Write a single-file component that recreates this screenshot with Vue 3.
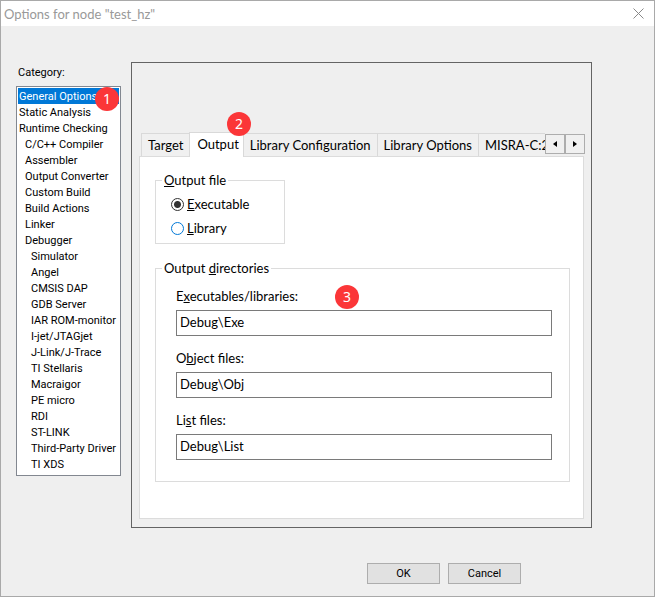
<script setup>
import { ref } from 'vue'

const categories = [
  { name: 'General Options', level: 0 },
  { name: 'Static Analysis', level: 0 },
  { name: 'Runtime Checking', level: 0 },
  { name: 'C/C++ Compiler', level: 1 },
  { name: 'Assembler', level: 1 },
  { name: 'Output Converter', level: 1 },
  { name: 'Custom Build', level: 1 },
  { name: 'Build Actions', level: 1 },
  { name: 'Linker', level: 1 },
  { name: 'Debugger', level: 1 },
  { name: 'Simulator', level: 2 },
  { name: 'Angel', level: 2 },
  { name: 'CMSIS DAP', level: 2 },
  { name: 'GDB Server', level: 2 },
  { name: 'IAR ROM-monitor', level: 2 },
  { name: 'I-jet/JTAGjet', level: 2 },
  { name: 'J-Link/J-Trace', level: 2 },
  { name: 'TI Stellaris', level: 2 },
  { name: 'Macraigor', level: 2 },
  { name: 'PE micro', level: 2 },
  { name: 'RDI', level: 2 },
  { name: 'ST-LINK', level: 2 },
  { name: 'Third-Party Driver', level: 2 },
  { name: 'TI XDS', level: 2 },
]
const selected = ref('General Options')

const tabs = ['Target', 'Output', 'Library Configuration', 'Library Options', 'MISRA-C:2004']
const activeTab = ref('Output')

const kind = ref('exe')
const exeDir = ref('Debug\\Exe')
const objDir = ref('Debug\\Obj')
const listDir = ref('Debug\\List')
</script>

<template>
  <div class="dialog">
    <header class="titlebar">
      <h1 class="title">Options for node "test_hz"</h1>
      <button class="close" type="button" aria-label="Close">
        <svg width="11" height="11" viewBox="0 0 11 11"><path d="M.5 .5l10 10M10.5 .5l-10 10" /></svg>
      </button>
    </header>

    <main class="body">
      <section class="sidebar">
        <h2 id="category" class="caption">Category:</h2>
        <div class="listwrap">
          <ul class="list" role="listbox" aria-labelledby="category">
            <li
              v-for="c in categories"
              :key="c.name"
              role="option"
              :aria-selected="c.name === selected"
              :class="['item', 'level' + c.level, { selected: c.name === selected }]"
              @click="selected = c.name"
            >{{ c.name }}</li>
          </ul>
          <span class="badge badge-list">1</span>
        </div>
      </section>

      <section class="panel">
        <div class="tabrow">
          <div class="tabs" role="tablist">
            <button
              v-for="t in tabs"
              :key="t"
              type="button"
              role="tab"
              :aria-selected="t === activeTab"
              :class="['tab', { active: t === activeTab }]"
              @click="activeTab = t"
            >{{ t }}</button>
          </div>
          <div class="scroller">
            <button type="button" aria-label="Scroll tabs left">
              <svg width="4" height="6" viewBox="0 0 4 6"><path d="M4 0v6L0 3z" /></svg>
            </button>
            <button type="button" aria-label="Scroll tabs right">
              <svg width="4" height="6" viewBox="0 0 4 6"><path d="M0 0v6l4-3z" /></svg>
            </button>
          </div>
          <span class="badge badge-tab">2</span>
        </div>

        <div class="page" role="tabpanel">
          <fieldset class="group group-file">
            <legend><u>O</u>utput file</legend>
            <label class="radio"><input v-model="kind" type="radio" name="kind" value="exe"><span><u>E</u>xecutable</span></label>
            <label class="radio"><input v-model="kind" type="radio" name="kind" value="lib" class="hot"><span><u>L</u>ibrary</span></label>
          </fieldset>

          <fieldset class="group group-dirs">
            <legend>Output <u>d</u>irectories</legend>
            <div class="field">
              <label for="exe">E<u>x</u>ecutables/libraries:</label>
              <input id="exe" v-model="exeDir" type="text">
              <span class="badge badge-field">3</span>
            </div>
            <div class="field">
              <label for="obj">O<u>b</u>ject files:</label>
              <input id="obj" v-model="objDir" type="text">
            </div>
            <div class="field">
              <label for="lst">Li<u>s</u>t files:</label>
              <input id="lst" v-model="listDir" type="text">
            </div>
          </fieldset>
        </div>
      </section>
    </main>

    <footer class="actions">
      <button type="button">OK</button>
      <button type="button">Cancel</button>
    </footer>
  </div>
</template>

<style>
body {
  margin: 0;
}
</style>

<style scoped>
.dialog {
  box-sizing: border-box;
  display: flex;
  flex-direction: column;
  min-height: 100vh;
  border: 1px solid #a9a9a9;
  background: #efefef;
  color: #000;
  font-family: Lato, "Noto Sans", sans-serif;
  font-size: 13px;
  line-height: 18px;
}

.dialog button,
.dialog input {
  box-sizing: border-box;
  margin: 0;
  padding: 0;
  font: inherit;
  color: inherit;
}

.titlebar {
  display: flex;
  align-items: center;
  justify-content: space-between;
  height: 25px;
  padding: 0 10px 0 3px;
  background: #fff;
}

.title {
  margin: 0;
  color: #999;
  font-size: 13px;
  font-weight: 400;
}

.close {
  display: flex;
  border: 0;
  background: none;
}

.close svg {
  fill: none;
  stroke: #888;
}

.body {
  flex: 1;
  display: flex;
  align-items: flex-start;
  gap: 10px;
  padding: 36px 62px 0 15px;
}

.sidebar {
  flex: none;
  width: 105px;
}

.caption {
  margin: 0;
  padding: 2px 2px 4px;
  font: 400 11px/18px Roboto, sans-serif;
}

.listwrap {
  position: relative;
}

.list {
  margin: 0;
  padding: 1px 1px 3px;
  border: 1px solid #828790;
  background: #fff;
  list-style: none;
  font: 11px/14px Roboto, sans-serif;
  white-space: nowrap;
}

.item {
  padding-top: 2px;
  padding-left: 1px;
}

.level1 {
  padding-left: 7px;
}

.level2 {
  padding-left: 13px;
}

.selected {
  background: #0078d7;
  color: #fff;
}

.badge {
  position: absolute;
  width: 24px;
  height: 24px;
  border-radius: 50%;
  background: #fb3638;
  color: #fff;
  font: 14px/24px "Noto Sans", sans-serif;
  text-align: center;
}

.badge-list {
  top: 1px;
  right: 2px;
}

.badge-tab {
  top: -20px;
  left: 88px;
}

.badge-field {
  top: -2px;
  left: 159px;
}

.panel {
  flex: 1;
  min-width: 0;
  padding: 69px 7px 8px;
  border: 1px solid #646464;
}

.tabrow {
  position: relative;
  z-index: 1;
  display: flex;
  margin-bottom: -1px;
  padding-left: 2px;
}

.tabs {
  flex: 1;
  display: flex;
  align-items: flex-end;
  min-width: 0;
  overflow: hidden;
}

.dialog .tab {
  flex: none;
  height: 23px;
  margin: 0 0 1px -1px;
  padding: 0 6px;
  border: 1px solid #d9d9d9;
  border-bottom: 0;
  background: #f0f0f0;
}

.dialog .tab:first-child {
  margin-left: 0;
}

.dialog .tab.active {
  height: 25px;
  margin-bottom: 0;
  padding: 0 4px 3px 7px;
  background: #fff;
}

.scroller {
  display: flex;
  margin: 2px -1px 3px 0;
}

.scroller button {
  display: flex;
  align-items: center;
  justify-content: center;
  width: 20px;
  height: 20px;
  border: 1px solid #adadad;
  background: #f0f0f0;
}

.page {
  padding: 14px 13px 36px 15px;
  border: 1px solid #dcdcdc;
  background: #fff;
}

.group {
  box-sizing: border-box;
  min-width: 0;
  margin: 0;
  border: 1px solid #dcdcdc;
}

.group legend {
  padding: 0 2px;
}

.group-file {
  width: 130px;
  height: 73px;
  padding: 3px 15px 0;
}

.group-file legend {
  margin-left: -9px;
}

.group-dirs {
  margin-top: 15px;
  padding: 10px 17px 21px 20px;
}

.group-dirs legend {
  margin-left: -14px;
}

.radio {
  display: flex;
  align-items: center;
  gap: 3px;
  height: 24px;
}

.dialog .radio input {
  appearance: none;
  width: 13px;
  height: 13px;
  border: 1px solid #333;
  border-radius: 50%;
  background: #fff;
}

.dialog .radio .hot {
  border-color: #0078d7;
}

.radio input:checked {
  background: radial-gradient(circle, #333 3px, #fff 4px);
}

.field {
  position: relative;
  display: flex;
  flex-direction: column;
  gap: 5px;
}

.field + .field {
  margin-top: 13px;
}

.dialog .field input {
  width: 100%;
  height: 26px;
  padding: 0 3px 2px;
  border: 1px solid #7a7a7a;
  border-radius: 0;
  background: #fff;
}

.actions {
  display: flex;
  justify-content: flex-end;
  gap: 8px;
  padding: 0 133px 12px 0;
}

.dialog .actions button {
  width: 73px;
  height: 21px;
  border: 1px solid #adadad;
  background: #e1e1e1;
  font: 11px/18px Roboto, sans-serif;
}
</style>
